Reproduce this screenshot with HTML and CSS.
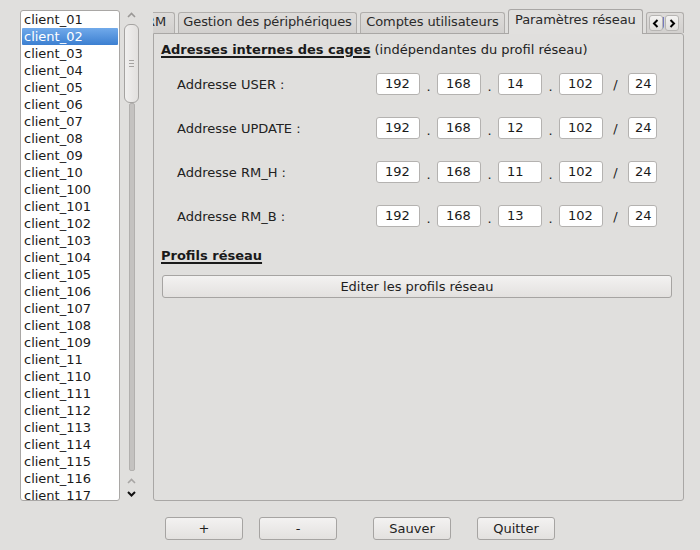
FILE: index.html
```html
<!DOCTYPE html>
<html lang="fr">
<head>
<meta charset="utf-8">
<title>Paramètres réseau</title>
<link rel="stylesheet" href="styles.css">
</head>
<body>
<div class="window">
  <div class="top">
    <div class="list">
      <div class="item">client_01</div>
      <div class="item sel">client_02</div>
      <div class="item">client_03</div>
      <div class="item">client_04</div>
      <div class="item">client_05</div>
      <div class="item">client_06</div>
      <div class="item">client_07</div>
      <div class="item">client_08</div>
      <div class="item">client_09</div>
      <div class="item">client_10</div>
      <div class="item">client_100</div>
      <div class="item">client_101</div>
      <div class="item">client_102</div>
      <div class="item">client_103</div>
      <div class="item">client_104</div>
      <div class="item">client_105</div>
      <div class="item">client_106</div>
      <div class="item">client_107</div>
      <div class="item">client_108</div>
      <div class="item">client_109</div>
      <div class="item">client_11</div>
      <div class="item">client_110</div>
      <div class="item">client_111</div>
      <div class="item">client_112</div>
      <div class="item">client_113</div>
      <div class="item">client_114</div>
      <div class="item">client_115</div>
      <div class="item">client_116</div>
      <div class="item">client_117</div>
    </div>
    <div class="vscroll">
      <div class="arrow up-top"><svg width="9" height="6" viewBox="0 0 9 6"><path d="M1 5 L4.5 1.5 L8 5" fill="none" stroke="#9a9896" stroke-width="1.6"/></svg></div>
      <div class="handle"><span class="grip"></span><span class="grip"></span><span class="grip"></span></div>
      <div class="groove"></div>
      <div class="arrow up-bot"><svg width="9" height="6" viewBox="0 0 9 6"><path d="M1 5 L4.5 1.5 L8 5" fill="none" stroke="#a8a6a4" stroke-width="1.6"/></svg></div>
      <div class="arrow down"><svg width="9" height="6" viewBox="0 0 9 6"><path d="M1 1 L4.5 4.5 L8 1" fill="none" stroke="#111" stroke-width="2"/></svg></div>
    </div>
    <div class="tabs">
      <div class="tabbar">
        <div class="tab clip"><span>RM</span></div>
        <div class="tab t2">Gestion des périphériques</div>
        <div class="tab t3">Comptes utilisateurs</div>
        <div class="tab active">Paramètres réseau</div>
        <div class="tab rest"><span>Jo</span>
          <div class="scrollbtns">
            <div class="sbtn"><svg width="8" height="9" viewBox="0 0 8 9"><path d="M5.5 1 L2 4.5 L5.5 8" fill="none" stroke="#000" stroke-width="2"/></svg></div>
            <div class="sbtn"><svg width="8" height="9" viewBox="0 0 8 9"><path d="M2.5 1 L6 4.5 L2.5 8" fill="none" stroke="#000" stroke-width="2"/></svg></div>
          </div>
        </div>
      </div>
      <div class="panel">
        <div class="section"><span class="head">Adresses internes des cages</span> (indépendantes du profil réseau)</div>
        <div class="rows">
          <div class="row">
            <div class="label">Addresse USER :</div>
            <div class="field">192</div><div class="sep">.</div>
            <div class="field">168</div><div class="sep">.</div>
            <div class="field">14</div><div class="sep">.</div>
            <div class="field">102</div><div class="slash">/</div>
            <div class="field mask">24</div>
          </div>
          <div class="row">
            <div class="label">Addresse UPDATE :</div>
            <div class="field">192</div><div class="sep">.</div>
            <div class="field">168</div><div class="sep">.</div>
            <div class="field">12</div><div class="sep">.</div>
            <div class="field">102</div><div class="slash">/</div>
            <div class="field mask">24</div>
          </div>
          <div class="row">
            <div class="label">Addresse RM_H :</div>
            <div class="field">192</div><div class="sep">.</div>
            <div class="field">168</div><div class="sep">.</div>
            <div class="field">11</div><div class="sep">.</div>
            <div class="field">102</div><div class="slash">/</div>
            <div class="field mask">24</div>
          </div>
          <div class="row">
            <div class="label">Addresse RM_B :</div>
            <div class="field">192</div><div class="sep">.</div>
            <div class="field">168</div><div class="sep">.</div>
            <div class="field">13</div><div class="sep">.</div>
            <div class="field">102</div><div class="slash">/</div>
            <div class="field mask">24</div>
          </div>
        </div>
        <div class="section second"><span class="head">Profils réseau</span></div>
        <div class="btn wide">Editer les profils réseau</div>
      </div>
    </div>
  </div>
  <div class="bottom">
    <div class="btn b1">+</div>
    <div class="btn b2">-</div>
    <div class="btn b3">Sauver</div>
    <div class="btn b4">Quitter</div>
  </div>
</div>
</body>
</html>
```

FILE: styles.css
```css
html, body {
  margin: 0;
  padding: 0;
  background: #e0dfdd;
}
body {
  font-family: "DejaVu Sans", "Liberation Sans", sans-serif;
  font-size: 13px;
  color: #1e1e1e;
  width: 700px;
  height: 550px;
  overflow: hidden;
}
.window {
  padding: 10px 0 0 20px;
}
.top {
  display: flex;
  height: 491px;
}
.list {
  width: 98px;
  height: 489px;
  border: 1px solid #a9a7a5;
  border-radius: 3px;
  background: #fff;
  overflow: hidden;
}
.item {
  height: 17px;
  line-height: 17px;
  padding-left: 3px;
  white-space: nowrap;
  color: #1a1a1a;
}
.item.sel {
  background: linear-gradient(#71aaea, #3c7fd1);
  color: #fff;
  margin: 0 1px;
  padding-left: 2px;
  border-radius: 1px;
}
.vscroll {
  width: 17px;
  margin-left: 3px;
  display: flex;
  flex-direction: column;
  align-items: center;
}
.arrow {
  height: 6px;
  display: flex;
  justify-content: center;
}
.up-top { margin-top: 2px; }
.handle {
  margin-top: 6px;
  width: 13px;
  height: 77px;
  border: 1px solid #a5a3a1;
  border-radius: 6px;
  background: linear-gradient(90deg, #f1f0ef, #e2e0de);
  display: flex;
  flex-direction: column;
  align-items: center;
  justify-content: center;
  gap: 2px;
}
.grip {
  width: 5px;
  height: 1px;
  background: #a5a3a1;
}
.groove {
  width: 4px;
  height: 366px;
  border: 1px solid #b2b0ae;
  background: #c4c2c0;
  border-radius: 2px;
}
.up-bot { margin-top: 7px; }
.down { margin-top: 7px; }
.tabs {
  margin-left: 13px;
  width: 531px;
  display: flex;
  flex-direction: column;
}
.tabbar {
  height: 23px;
  display: flex;
  align-items: flex-end;
  gap: 3px;
  position: relative;
  z-index: 1;
}
.tab {
  height: 21px;
  line-height: 18px;
  box-sizing: border-box;
  border: 1px solid #b0aeac;
  border-bottom: none;
  border-radius: 3px 3px 0 0;
  background: linear-gradient(#dedcda, #d2d0ce);
  color: #2a2a2a;
  white-space: nowrap;
  overflow: hidden;
  text-align: center;
  letter-spacing: -0.1px;
}
.tab.clip {
  width: 22px;
  border-left: none;
  border-radius: 0 3px 0 0;
  text-align: left;
}
.tab.clip span {
  margin-left: -7px;
}
.t2 { width: 180px; }
.t3 { width: 145px; }
.tab.active {
  width: 136px;
  height: 25px;
  line-height: 20px;
  margin-bottom: -1px;
  background: #e1e0de;
  border-color: #a9a7a5;
}
.tab.rest {
  width: 38px;
  position: relative;
  text-align: left;
  padding-left: 14px;
  color: #6a3a8a;
}
.scrollbtns {
  position: absolute;
  left: 2px;
  top: 2px;
  display: flex;
  gap: 2px;
}
.sbtn {
  width: 14px;
  height: 16px;
  box-sizing: border-box;
  border: 1px solid #b7b5b3;
  border-radius: 3px;
  background: linear-gradient(#f4f3f2, #e0dedc);
  display: flex;
  align-items: center;
  justify-content: center;
}
.panel {
  flex: 1;
  border: 1px solid #a9a7a5;
  border-radius: 0 3px 3px 3px;
  background: #e0dfdd;
  padding: 8px 11px 0 7px;
}
.section {
  height: 16px;
  line-height: 16px;
  white-space: nowrap;
  color: #222;
}
.head {
  font-weight: bold;
  text-decoration: underline;
  text-decoration-thickness: 2px;
  text-underline-offset: 2px;
  color: #1a1a1a;
}
.rows {
  margin-top: 15px;
  display: flex;
  flex-direction: column;
  gap: 22px;
}
.row {
  display: flex;
  height: 22px;
  align-items: center;
}
.label {
  width: 199px;
  padding-left: 16px;
  color: #222;
}
.field {
  width: 44px;
  height: 22px;
  box-sizing: border-box;
  border: 1px solid #b4b2b0;
  border-radius: 3px;
  background: #fff;
  line-height: 20px;
  padding-left: 8px;
  color: #1a1a1a;
}
.field.mask {
  width: 29px;
  padding-left: 6px;
}
.sep {
  width: 17px;
  text-align: center;
  padding-top: 4px;
}
.slash {
  width: 25px;
  text-align: center;
}
.section.second {
  margin-top: 21px;
}
.btn {
  height: 23px;
  box-sizing: border-box;
  border: 1px solid #a6a4a2;
  border-radius: 3px;
  background: linear-gradient(#f3f2f1, #e3e1df);
  line-height: 21px;
  text-align: center;
  color: #1e1e1e;
}
.btn.wide {
  margin-top: 11px;
  margin-left: 1px;
}
.bottom {
  display: flex;
  padding: 16px 0 0 145px;
}
.bottom .btn {
  width: 78px;
}
.b2 { margin-left: 16px; }
.b3 { margin-left: 36px; }
.b4 { margin-left: 26px; }
```
